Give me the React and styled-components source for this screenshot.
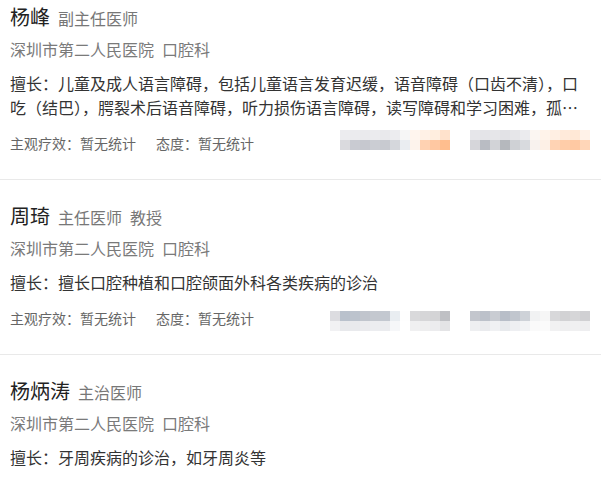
import React from "react";
import styled, { createGlobalStyle } from "styled-components";

const Global = createGlobalStyle`
  html, body { margin: 0; padding: 0; background: #fff; }
  body { font-family: "Noto Sans CJK SC", "Microsoft YaHei", sans-serif; overflow: hidden; }
`;

const List = styled.div`
  width: 601px;
  margin-top: -19px;
`;

const Item = styled.div`
  padding: 22px 10px 26px;
  border-bottom: 1px solid #e9e9e9;
`;

const NameRow = styled.div`
  display: flex;
  align-items: baseline;
  height: 28px;
  line-height: 28px;
`;

const Name = styled.span`
  font-size: 20px;
  color: #222;
`;

const Title = styled.span`
  font-size: 16px;
  color: #777;
  margin-left: 8px;
`;

const Hospital = styled.div`
  display: flex;
  margin-top: 6px;
  font-size: 16px;
  line-height: 24px;
  color: #7a7a7a;
  gap: 8px;
`;

const Desc = styled.div`
  margin-top: 10px;
  font-size: 16px;
  line-height: 24px;
  color: #333;
  display: -webkit-box;
  -webkit-box-orient: vertical;
  -webkit-line-clamp: 2;
  overflow: hidden;
`;

const Stats = styled.div`
  display: flex;
  align-items: center;
  margin-top: 14px;
  height: 20px;
  font-size: 14px;
  line-height: 20px;
  color: #666;
  padding-right: 1px;
`;

const Stat = styled.span`
  & + & { margin-left: 20px; }
`;

const Mosaics = styled.div`
  margin-left: auto;
  display: flex;
  gap: 20px;
  transform: translateY(${(p) => p.$dy}px);
  filter: blur(0.7px);
`;

const Mosaic = styled.div`
  display: grid;
  grid-template-columns: repeat(${(p) => p.$cols}, 10px);
  grid-auto-rows: 10px;
`;

const Cell = styled.div`
  background: ${(p) => p.$c};
`;

const mosaic1 = [
  [
    ["#ececef", "#ebebee", "#eaeaed", "#ebebee", "#e9e9ec", "#ececef", "#f6f6f6", "#fff5ee", "#fff1e6", "#ffeedf", "#ffe2cc"],
    ["#dadade", "#c9cbd2", "#c6c8cf", "#cbcdd3", "#c8cad0", "#d5d7dc", "#eaedf1", "#fdf3ec", "#ffd2b2", "#ffc8a2", "#ffbe8e"],
  ],
  [
    ["#e6e6ea", "#e4e4e8", "#e6e6e9", "#e2e2e6", "#e6e6e9", "#ebebee", "#fbf6f2", "#fff3ea", "#ffefe3", "#ffeada", "#ffe8d6", "#fff2e8"],
    ["#d6d6da", "#b9bcc3", "#d2d3d7", "#b5b8bd", "#cfd1d5", "#d8dade", "#f8f2ee", "#fdf0e6", "#ffd3b4", "#ffcda9", "#ffc9a3", "#ffd6b8"],
  ],
];

const mosaic2 = [
  [
    ["#dcdce0", "#b9c1cc", "#bcc3cd", "#c1c5cd", "#c4c8cf", "#c3c8d0", "#e9edf1", "#fefefe", "#d9d9db", "#d6d6d8", "#d4d4d6", "#bfc0c4"],
    ["#f1f1f3", "#e8e9ec", "#e9eaed", "#ebebee", "#ecedf0", "#ebecef", "#f6f7f9", "#ffffff", "#f0f0f1", "#eeeeef", "#ececee", "#e4e4e6"],
  ],
  [
    ["#c3c6cd", "#bcc1ca", "#c9ccd2", "#b8bec8", "#c1c6ce", "#ced2d8", "#f1f2f3", "#f6f6f6", "#d8d8da", "#d2d2d4", "#d6d6d8", "#d0d0d3"],
    ["#eeeff1", "#eaebee", "#f0f1f3", "#e8eaed", "#eeeff2", "#f2f3f5", "#fafafa", "#fbfbfb", "#f1f1f2", "#efeff0", "#f0f0f1", "#eeeef0"],
  ],
];

const doctors = [
  {
    name: "杨峰",
    titles: ["副主任医师"],
    desc:
      "擅长：儿童及成人语言障碍，包括儿童语言发育迟缓，语音障碍（口齿不清），口吃（结巴），腭裂术后语音障碍，听力损伤语言障碍，读写障碍和学习困难，孤独症谱系障碍等",
    stats: true,
    mosaic: mosaic1,
    dy: -3,
  },
  {
    name: "周琦",
    titles: ["主任医师", "教授"],
    desc: "擅长：擅长口腔种植和口腔颌面外科各类疾病的诊治",
    stats: true,
    mosaic: mosaic2,
    dy: 3,
  },
  {
    name: "杨炳涛",
    titles: ["主治医师"],
    desc: "擅长：牙周疾病的诊治，如牙周炎等",
    stats: false,
  },
];

export default function App() {
  return (
    <>
      <Global />
      <List>
        {doctors.map((d) => (
          <Item key={d.name}>
            <NameRow>
              <Name>{d.name}</Name>
              {d.titles.map((t) => (
                <Title key={t}>{t}</Title>
              ))}
            </NameRow>
            <Hospital>
              <span>深圳市第二人民医院</span>
              <span>口腔科</span>
            </Hospital>
            <Desc>{d.desc}</Desc>
            {d.stats && (
              <Stats>
                <Stat>主观疗效：暂无统计</Stat>
                <Stat>态度：暂无统计</Stat>
                <Mosaics $dy={d.dy}>
                  {d.mosaic.map((block, bi) => (
                    <Mosaic key={bi} $cols={block[0].length}>
                      {block.flat().map((c, ci) => (
                        <Cell key={ci} $c={c} />
                      ))}
                    </Mosaic>
                  ))}
                </Mosaics>
              </Stats>
            )}
          </Item>
        ))}
      </List>
    </>
  );
}
